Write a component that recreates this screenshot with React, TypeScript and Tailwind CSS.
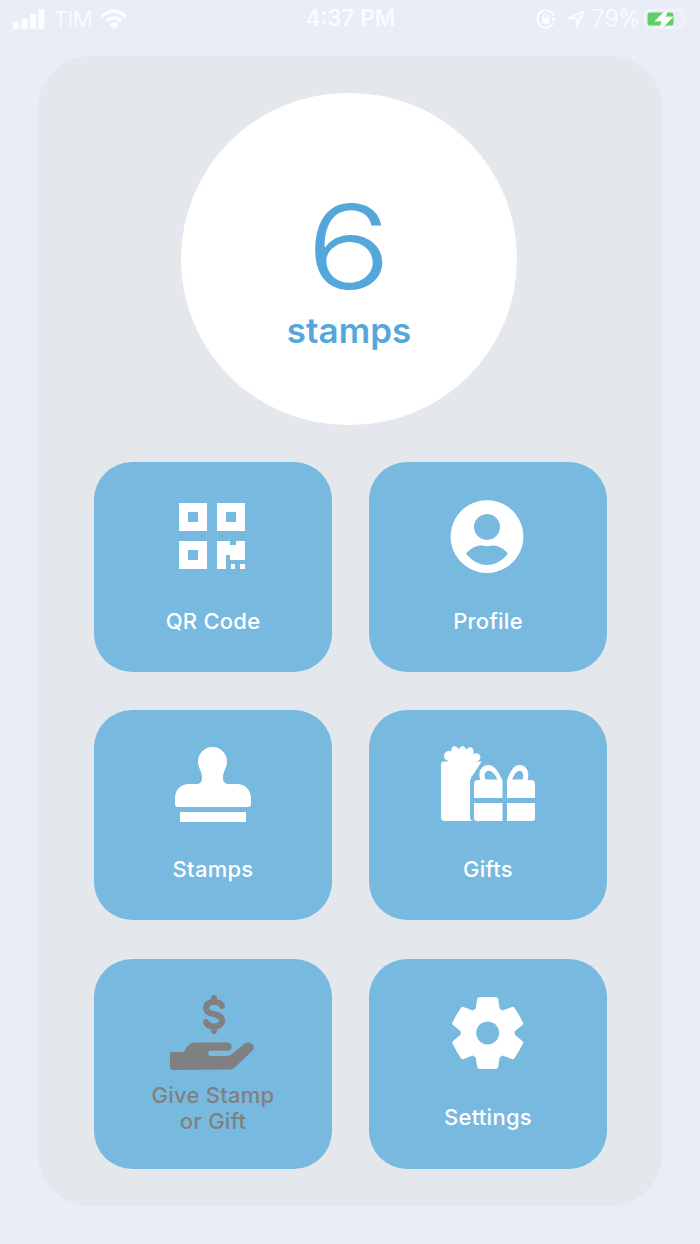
import React from "react";

const QrIcon = () => (
  <svg width="100" height="80" viewBox="0 0 100 80" fill="white">
    <path fillRule="evenodd" d="M16 5h28v28H16zM25 14v10h10V14z" />
    <path fillRule="evenodd" d="M54 5h28v28H54zM63 14v10h10V14z" />
    <path fillRule="evenodd" d="M16 43h28v28H16zM25 52v10h10V52z" />
    <path d="M54 43H67V47H73V43H82V62H67V57H63V71H54Z" />
    <rect x="68" y="66" width="4" height="5" />
    <rect x="77" y="66" width="5" height="5" />
  </svg>
);

const ProfileIcon = () => (
  <svg width="100" height="80" viewBox="0 0 100 80" fill="white">
    <path
      fillRule="evenodd"
      d="M49 2.2a36.4 36.4 0 1 0 0.01 0zM49 16a13 13 0 1 0 0.01 0zM28 55.5C33 49.5 40 47 44 47.5C47 48.5 51 48.5 54 47.5C58 47 65 49.5 70 55.5C64 63 57 67 49 67C41 67 34 63 28 55.5z"
    />
  </svg>
);

const StampIcon = () => (
  <svg width="100" height="80" viewBox="0 0 100 80" fill="white">
    <path d="M35 15.5A14.5 14.5 0 0 1 64 15.5C64 22 60 25 60 32C60 36 62 38 66 38L74 38C82 38 88 44 88 52L88 58Q88 61 85 61L15 61Q12 61 12 58L12 52C12 44 18 38 26 38L33 38C37 38 39 36 39 32C39 25 35 22 35 15.5Z" />
    <rect x="17" y="66" width="66" height="10" />
  </svg>
);

const GiftIcon = () => (
  <svg width="100" height="80" viewBox="0 0 100 80" fill="white">
    <path d="M6 15.5H43.7L35 29Q32 32 32 37V70Q32 74 34 75H6.5Q3 75 3 71V18.5Q3 15.5 6 15.5Z" />
    <ellipse cx="11" cy="10" rx="5" ry="5" />
    <ellipse cx="18" cy="6.5" rx="4.2" ry="6.5" transform="rotate(-25 18 6.5)" />
    <ellipse cx="24.5" cy="6" rx="3.8" ry="6" />
    <ellipse cx="31" cy="7" rx="4.2" ry="6" transform="rotate(25 31 7)" />
    <ellipse cx="37.5" cy="11.5" rx="5" ry="4.2" transform="rotate(-15 37.5 11.5)" />
    <rect x="10" y="9" width="26" height="8" />
    <path d="M40 34H64.5V52H36V38Q36 34 40 34Z" />
    <path d="M69 34H93Q97 34 97 38V52H69Z" />
    <path d="M36 57H64.5V75H39Q36 75 36 72Z" />
    <path d="M69 57H97V72Q97 75 94 75H69Z" />
    <path
      fillRule="evenodd"
      d="M64.5 34.5C60 24 55.5 19 50.5 19C43 19 39.5 26 42.5 34.5ZM59.5 33.5C57 28 53.5 24.8 50.5 24.8C47 24.8 45.5 29 47.5 33.5Z"
    />
    <path
      fillRule="evenodd"
      d="M69 34.5C72.5 24 76.5 19 81.5 19C88.5 19 92 26 89.5 34.5ZM74 33.5C76.5 28 79 24.8 81.5 24.8C85 24.8 86 29 84.5 33.5Z"
    />
  </svg>
);

const GiveIcon = () => (
  <svg width="100" height="80" viewBox="0 0 100 80" fill="#808080">
    <path
      d="M59 11C58 8 55 7 51 7C46 7 43 9.5 43 13C43 17 47 18.5 51 19C55 20 59 21.5 59 25.5C59 29 56 31.5 51 31.5C47 31.5 44 30 43 27M51 3V7M51 32V36"
      fill="none"
      stroke="#808080"
      strokeWidth="6"
      strokeLinecap="round"
    />
    <path d="M9 57H21C24 50 28 47.5 32 47.5H65A4.2 4.2 0 0 1 65 55.8H47.5C44.5 55.8 44.5 61 47.5 61H63C65 61 66.5 60.5 68 59.5L82 48.5C87 45 93.5 51 89.5 55.5L74 70.5C72 72.5 70 73.5 68 74.5L10 75Q7 75 7 72V59Q7 57 9 57Z" />
  </svg>
);

const GearIcon = () => (
  <svg width="100" height="80" viewBox="0 0 100 80" fill="white">
    <g transform="translate(49.7 38)">
      {[0, 60, 120, 180, 240, 300].map((a) => (
        <path
          key={a}
          transform={`rotate(${a})`}
          d="M-12 -24L-10.5 -34Q-10.3 -35.6 -8.5 -35.8Q0 -36.4 8.5 -35.8Q10.3 -35.6 10.5 -34L12 -24Z"
        />
      ))}
      <path
        fillRule="evenodd"
        d="M0 -27a27 27 0 1 0 0.01 0zM0 -11.5a11.5 11.5 0 1 1 -0.01 0z"
      />
    </g>
  </svg>
);

const StatusBar = () => (
  <div className="grid grid-cols-[1fr_auto_1fr] items-center h-[37px] pl-[13px] pr-[12px] text-white/80 font-['Inter',sans-serif]">
    <div className="flex items-center">
      <svg width="32" height="20" viewBox="0 0 32 20" fill="white" fillOpacity="0.85">
        <rect x="0" y="13" width="6" height="7" rx="1.5" />
        <rect x="8.5" y="9.5" width="6" height="10.5" rx="1.5" />
        <rect x="17" y="5" width="6" height="15" rx="1.5" />
        <rect x="25.5" y="0" width="6" height="20" rx="1.5" />
      </svg>
      <span className="ml-[9px] text-[22px] font-light leading-none tracking-[-0.5px]">TIM</span>
      <svg className="ml-[8px]" width="28" height="20" viewBox="0 0 28 20" fill="none" stroke="white" strokeOpacity="0.85">
        <path d="M2 7.5C9.5 0.5 18.5 0.5 26 7.5" strokeWidth="3.6" />
        <path d="M6.8 12C11 8 17 8 21.2 12" strokeWidth="3.4" />
        <path d="M14 20L9.5 15.4C12 13 16 13 18.5 15.4Z" fill="white" fillOpacity="0.85" stroke="none" />
      </svg>
    </div>
    <span className="text-[22.5px] font-medium leading-none">4:37 PM</span>
    <div className="flex items-center justify-end">
      <svg width="21" height="20" viewBox="0 0 21 20" fill="none" stroke="white" strokeOpacity="0.85">
        <path d="M17.6 6.5A8.5 8.5 0 1 0 17.6 13.5" strokeWidth="1.8" />
        <path d="M15 9h5l-2.5 3.4z" fill="white" fillOpacity="0.85" stroke="none" />
        <rect x="6" y="8.5" width="7.5" height="6" rx="1" fill="white" fillOpacity="0.85" stroke="none" />
        <path d="M7.5 8.5V7a2.2 2.2 0 0 1 4.5 0v1.5" strokeWidth="1.2" />
      </svg>
      <svg className="ml-[10px]" width="18" height="18" viewBox="0 0 18 18" fill="none" stroke="white" strokeOpacity="0.85" strokeWidth="1.8" strokeLinejoin="round">
        <path d="M16.5 1.5L1.5 8.5H9.5V16.5Z" />
      </svg>
      <span className="ml-[7px] text-[23.5px] font-light leading-none tracking-[-0.3px]">79%</span>
      <div className="relative ml-[4px] w-[44px] h-[22px]">
        <svg width="46" height="22" viewBox="0 0 46 22" fill="none">
          <rect x="1" y="2" width="38" height="18" rx="5" stroke="white" strokeOpacity="0.5" strokeWidth="1.5" />
          <rect x="3.5" y="4.5" width="26" height="13" rx="2.5" fill="#62CF66" />
          <path d="M41 8C43 8.5 43 13.5 41 14Z" fill="white" fillOpacity="0.5" />
          <path d="M24 0L11 13H18L15 23L29 9H21.5Z" fill="white" stroke="#E9EEF6" strokeWidth="1" />
        </svg>
      </div>
    </div>
  </div>
);

const Tile = ({
  label,
  icon,
  muted,
  labelClass,
}: {
  label: React.ReactNode;
  icon: React.ReactNode;
  muted?: boolean;
  labelClass: string;
}) => (
  <div className="h-[210px] rounded-[38px] bg-[#78B9DF] flex flex-col items-center pt-[36px]">
    {icon}
    <span
      className={`${labelClass} text-[22px] leading-[26px] font-[530] tracking-[0.25px] text-center ${
        muted ? "text-[#808080]" : "text-white"
      }`}
    >
      {label}
    </span>
  </div>
);

export default function App() {
  return (
    <div className="w-[700px] h-[1244px] bg-[#E9EEF6] overflow-hidden font-['Inter',sans-serif]">
      <StatusBar />
      <div className="mx-[38px] mt-[19px] h-[1150px] w-[624px] rounded-[52px] bg-[#E4E7EC] pt-[37px]">
        <div className="ml-[143px] w-[336px] h-[332px] rounded-full bg-white flex flex-col items-center text-[#55A7DB]">
          <span className="mt-[96px] h-[116px] text-[116px] leading-[116px] font-[320] scale-x-[1.22]">6</span>
          <span className="text-[35px] leading-[42px] font-semibold mt-[4px]">stamps</span>
        </div>
        <div className="mt-[37px] mx-[56px] grid grid-cols-[238px_238px] gap-x-[37px] gap-y-[38.25px]">
          <Tile label="QR Code" icon={<QrIcon />} labelClass="mt-[30px]" />
          <Tile label="Profile" icon={<ProfileIcon />} labelClass="mt-[30px]" />
          <Tile label="Stamps" icon={<StampIcon />} labelClass="mt-[30px]" />
          <Tile label="Gifts" icon={<GiftIcon />} labelClass="mt-[30px]" />
          <Tile
            label={
              <>
                Give Stamp
                <br />
                or Gift
              </>
            }
            icon={<GiveIcon />}
            muted
            labelClass="mt-[7px]"
          />
          <Tile label="Settings" icon={<GearIcon />} labelClass="mt-[29px]" />
        </div>
      </div>
    </div>
  );
}
